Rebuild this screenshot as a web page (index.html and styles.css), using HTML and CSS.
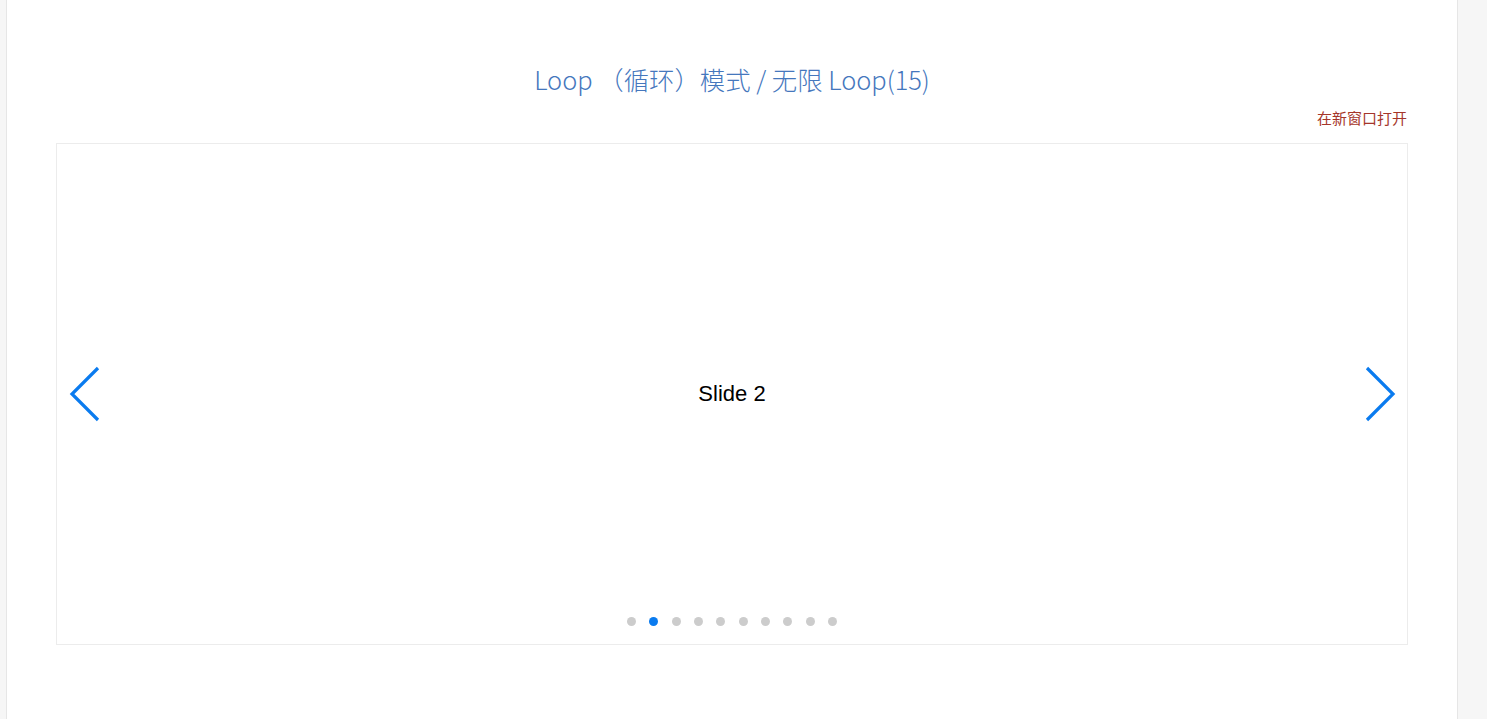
FILE: index.html
```html
<!DOCTYPE html>
<html lang="zh-CN">
<head>
<meta charset="utf-8">
<title>Loop</title>
<link rel="stylesheet" href="styles.css">
</head>
<body>
<div class="panel">
  <h1 class="title">Loop （循环）模式 / 无限 Loop(15)</h1>
  <div class="open-row"><a class="open-link" href="#">在新窗口打开</a></div>
  <div class="swiper">
    <button class="nav nav-prev" aria-label="prev">
      <svg width="31" height="56" viewBox="0 0 31 56"><path d="M29 2 L3 28 L29 54" fill="none" stroke="#0a7bef" stroke-width="3.2"/></svg>
    </button>
    <div class="slide">Slide 2</div>
    <button class="nav nav-next" aria-label="next">
      <svg width="31" height="56" viewBox="0 0 31 56"><path d="M2 2 L28 28 L2 54" fill="none" stroke="#0a7bef" stroke-width="3.2"/></svg>
    </button>
    <div class="dots">
      <span class="dot"></span>
      <span class="dot active"></span>
      <span class="dot"></span>
      <span class="dot"></span>
      <span class="dot"></span>
      <span class="dot"></span>
      <span class="dot"></span>
      <span class="dot"></span>
      <span class="dot"></span>
      <span class="dot"></span>
    </div>
  </div>
</div>
</body>
</html>
```
FILE: styles.css
```css
html, body {
  margin: 0;
  padding: 0;
  height: 100%;
}
body {
  background: #f6f6f6;
  font-family: "Noto Sans CJK SC", "Noto Sans", sans-serif;
  overflow: hidden;
}
.panel {
  margin-left: 6px;
  width: 1452px;
  min-height: 100%;
  box-sizing: border-box;
  background: #fff;
  border-left: 1px solid #e6e6e6;
  border-right: 1px solid #e6e6e6;
  padding: 61px 49px 0 49px;
}
.title {
  margin: 0;
  text-align: center;
  font-size: 25.4px;
  line-height: 36px;
  font-weight: 300;
  color: #4577bd;
  font-family: "Noto Sans CJK SC", sans-serif;
}
.open-row {
  display: flex;
  justify-content: flex-end;
  margin-top: 10px;
  height: 22px;
  margin-bottom: 14px;
}
.open-link {
  font-size: 15px;
  line-height: 22px;
  color: #a5362a;
  text-decoration: none;
  font-family: "Noto Sans CJK SC", sans-serif;
  margin-right: 1px;
}
.swiper {
  position: relative;
  height: 502px;
  border: 1px solid #ececec;
  box-sizing: border-box;
  display: flex;
  align-items: center;
  justify-content: center;
}
.slide {
  font-family: "Liberation Sans", Arial, sans-serif;
  font-size: 22px;
  color: #000;
  margin-bottom: 1px;
}
.nav {
  position: absolute;
  top: 222px;
  width: 31px;
  height: 56px;
  padding: 0;
  border: 0;
  background: none;
}
.nav svg { display: block; }
.nav-prev { left: 12px; }
.nav-next { right: 11px; }
.dots {
  position: absolute;
  left: 0;
  right: 0;
  bottom: 18px;
  display: flex;
  justify-content: center;
  gap: 13.4px;
}
.dot {
  width: 9px;
  height: 9px;
  border-radius: 50%;
  background: #cccccc;
}
.dot.active {
  background: #0a7bef;
}
```
